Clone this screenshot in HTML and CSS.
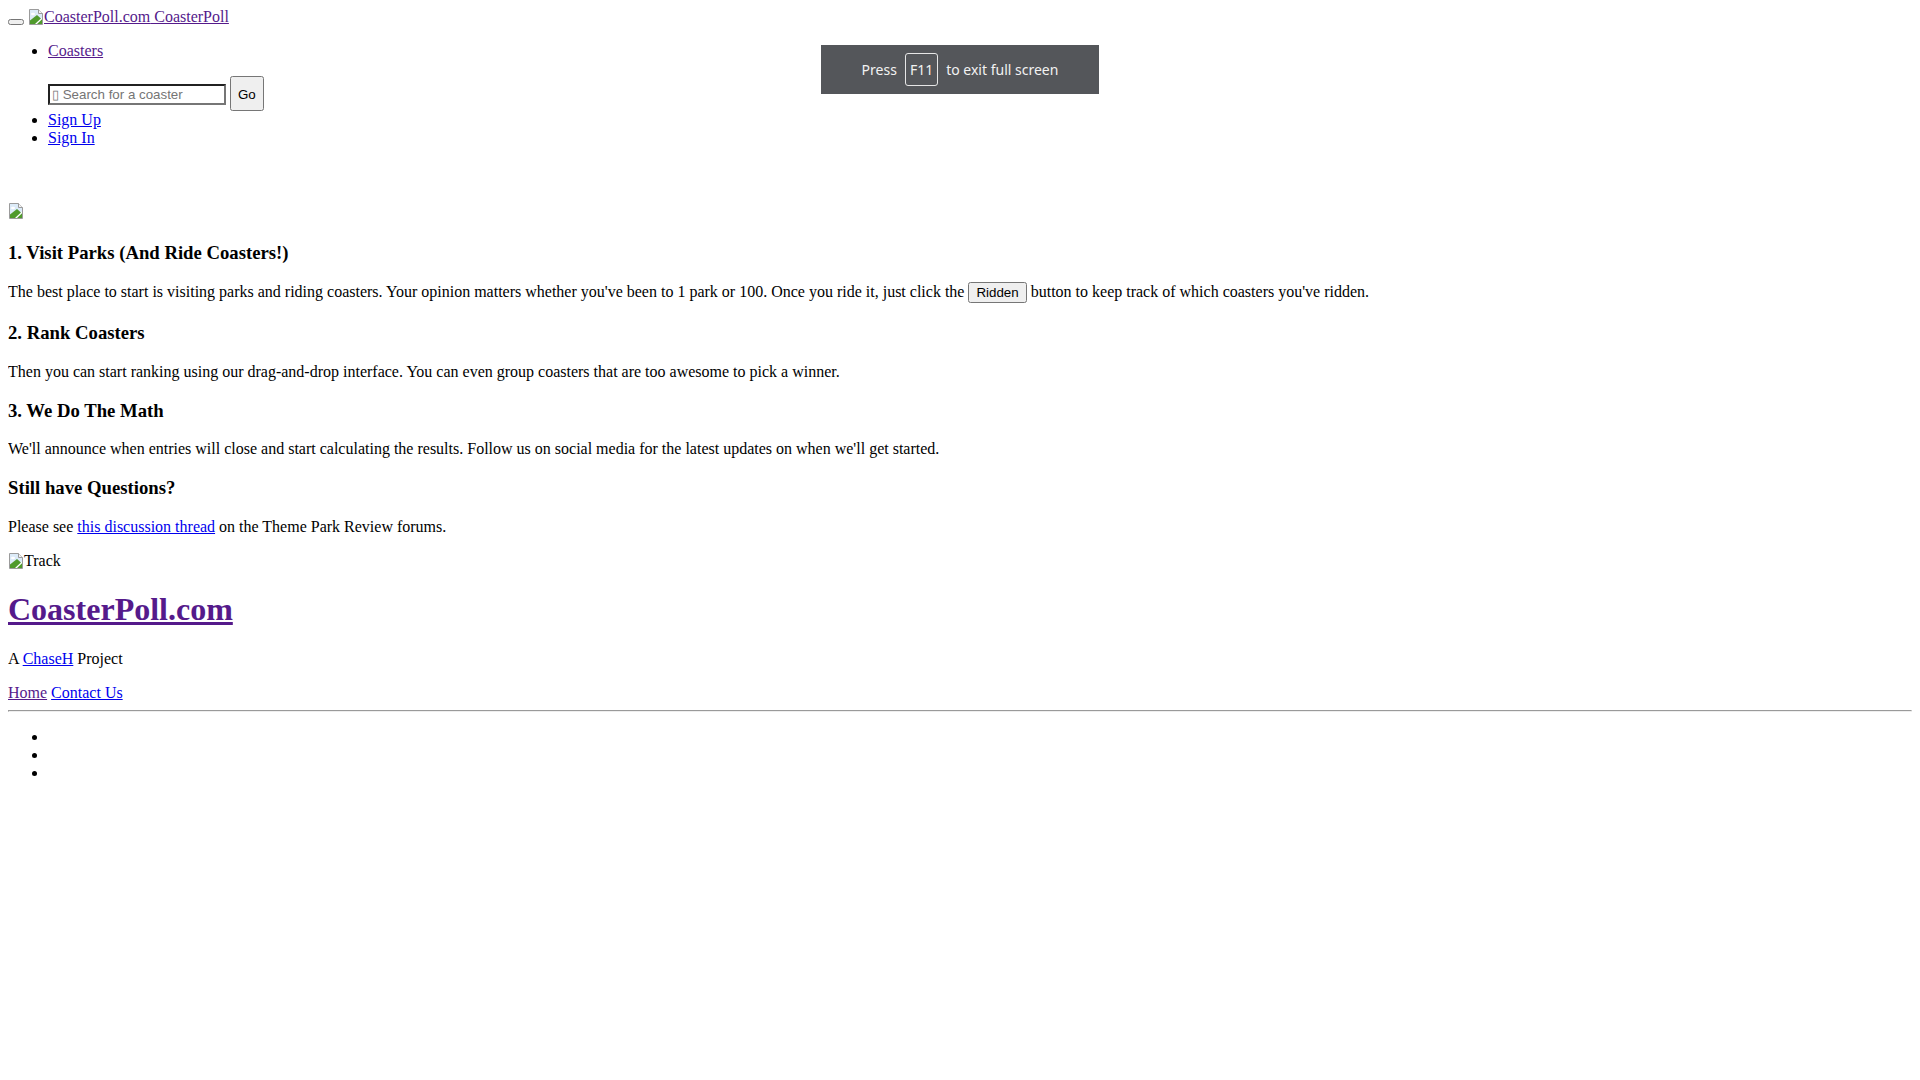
FILE: index.html
```html
<!DOCTYPE html>
<html lang="en">
<head>
  <meta charset="UTF-8" />
  <title>How It Works · CoasterPoll</title>
  <link rel="stylesheet" href="styles.css">
</head>
<body>
  <nav class="navbar">
    <button class="navbar-toggle" type="button"></button>
    <a class="brand visited" href="#"><span class="broken-img"><svg class="img-icon" viewBox="0 0 16 16" width="16" height="16"><path d="M1.5 .5h9l4 4v11h-13z" fill="#dcebf8" stroke="#9b9b9b"/><path d="M2 15V11.5L9 6l5 4.5V15z" fill="#4f9a2c"/><path d="M7 15l7-6.5v1.8L9 15z" fill="#fff"/><ellipse cx="5" cy="5" rx="2" ry="1.2" fill="#fff"/><path d="M10.5 .5v4h4" fill="#f4f4f4" stroke="#9b9b9b"/></svg>CoasterPoll.com</span> CoasterPoll</a>
    <ul class="nav-list">
      <li><a class="visited" href="#">Coasters</a></li>
      <form class="search">
        <input class="search-input" type="text" placeholder="&#x25AF; Search for a coaster">
        <button class="search-go" type="submit">Go</button>
      </form>
      <li><a href="#">Sign Up</a></li>
      <li><a href="#">Sign In</a></li>
    </ul>
  </nav>

  <main class="content">
    <p class="hero"><svg class="img-icon" viewBox="0 0 16 16" width="16" height="16"><path d="M1.5 .5h9l4 4v11h-13z" fill="#dcebf8" stroke="#9b9b9b"/><path d="M2 15V11.5L9 6l5 4.5V15z" fill="#4f9a2c"/><path d="M7 15l7-6.5v1.8L9 15z" fill="#fff"/><ellipse cx="5" cy="5" rx="2" ry="1.2" fill="#fff"/><path d="M10.5 .5v4h4" fill="#f4f4f4" stroke="#9b9b9b"/></svg></p>

    <h3>1. Visit Parks (And Ride Coasters!)</h3>
    <p>The best place to start is visiting parks and riding coasters. Your opinion matters whether you've been to 1 park or 100. Once you ride it, just click the <button class="ridden" type="button">Ridden</button> button to keep track of which coasters you've ridden.</p>

    <h3>2. Rank Coasters</h3>
    <p>Then you can start ranking using our drag-and-drop interface. You can even group coasters that are too awesome to pick a winner.</p>

    <h3>3. We Do The Math</h3>
    <p>We'll announce when entries will close and start calculating the results. Follow us on social media for the latest updates on when we'll get started.</p>

    <h3>Still have Questions?</h3>
    <p>Please see <a href="#">this discussion thread</a> on the Theme Park Review forums.</p>
  </main>

  <footer class="footer">
    <p class="track"><svg class="img-icon" viewBox="0 0 16 16" width="16" height="16"><path d="M1.5 .5h9l4 4v11h-13z" fill="#dcebf8" stroke="#9b9b9b"/><path d="M2 15V11.5L9 6l5 4.5V15z" fill="#4f9a2c"/><path d="M7 15l7-6.5v1.8L9 15z" fill="#fff"/><ellipse cx="5" cy="5" rx="2" ry="1.2" fill="#fff"/><path d="M10.5 .5v4h4" fill="#f4f4f4" stroke="#9b9b9b"/></svg>Track</p>
    <h1><a class="visited" href="#">CoasterPoll.com</a></h1>
    <p>A <a href="#">ChaseH</a> Project</p>
    <div class="footer-links"><a class="visited" href="#">Home</a> <a href="#">Contact Us</a></div>
    <hr>
    <ul class="social">
      <li><a href="#"></a></li>
      <li><a href="#"></a></li>
      <li><a href="#"></a></li>
    </ul>
  </footer>

  <!-- browser full screen hint -->
  <div class="fs-hint">Press <span class="fs-key">F11</span> to exit full screen</div>
</body>
</html>
```

FILE: styles.css
```css
/* ========== raw page: browser defaults ========== */
body {
  font-family: "Liberation Serif", "Times New Roman", serif;
  font-size: 16px;
  color: #000;
  background: #fff;
}
a { color: #0000ee; }
a.visited { color: #551a8b; }

/* broken image placeholder */
.img-icon { vertical-align: -3px; }

/* ====== header ====== */
.navbar-toggle { vertical-align: baseline; }
.nav-list { margin: 16px 0 16px; }
.search { margin: 16px 0 0; }
.search-input {
  width: 170px;
  font-family: "Liberation Sans", Arial, sans-serif;
  font-size: 13.33px;
  padding: 1px 2px;
  border: 2px inset #767676;
}
.search-input::placeholder { color: #757575; }
.search-go {
  font-family: "Liberation Sans", Arial, sans-serif;
  padding: 9px 6px 7px;
}

/* ====== content ====== */
.hero { margin-top: 56px; }
.hero .img-icon { vertical-align: baseline; }
.ridden { font-family: "Liberation Sans", Arial, sans-serif; }

/* ====== footer ====== */
.footer h1 { margin: 21.44px 0; }

/* ====== full screen hint ====== */
.fs-hint {
  position: fixed;
  top: 45px;
  left: 821px;
  width: 278px;
  height: 49px;
  display: flex;
  align-items: center;
  justify-content: center;
  gap: 6px;
  background: #54565a;
  color: #f2f2f2;
  font-family: "Noto Sans", "Open Sans", sans-serif;
  font-size: 14px;
}
.fs-key {
  border: 1px solid #e6e6e6;
  border-radius: 3px;
  padding: 6px 4px;
  margin: 0 2px;
}
```
